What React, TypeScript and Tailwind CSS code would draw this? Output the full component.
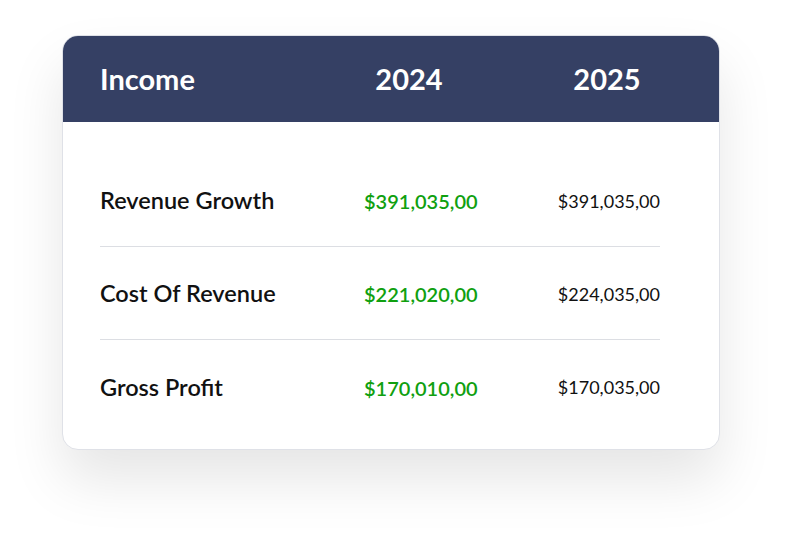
const rows = [
  { label: 'Revenue Growth', y2024: '$391,035,00', y2025: '$391,035,00' },
  { label: 'Cost Of Revenue', y2024: '$221,020,00', y2025: '$224,035,00' },
  { label: 'Gross Profit', y2024: '$170,010,00', y2025: '$170,035,00' },
]

export default function App() {
  return (
    <div
      className="w-[800px] h-[556px] bg-white pt-[35px] pl-[62px]"
      style={{ fontFamily: 'Lato, "Noto Sans", sans-serif' }}
    >
      <div className="w-[658px] rounded-[16px] border border-[#dfe1e7] bg-white overflow-hidden shadow-[0_30px_55px_rgba(0,0,0,0.1)]">
        {/* header */}
        <div className="h-[86px] bg-[#354064] flex items-center px-[37px] text-white font-bold text-[29px]">
          <div className="w-[264px]">Income</div>
          <div className="w-[90px] text-center">2024</div>
          <div className="w-[100px]" />
          <div className="w-[106px] text-center">2025</div>
        </div>

        {/* body */}
        <div className="pl-[37px] pr-[59px] pt-[32px] pb-[16px]">
          {rows.map((r, i) => (
            <div
              key={r.label}
              className={
                'h-[93px] flex items-center pt-[2px] ' +
                (i < rows.length - 1 ? 'border-b border-[#dcdee3]' : '')
              }
            >
              <div className="w-[264px] text-[23.5px] font-semibold text-[#111]">{r.label}</div>
              <div className="flex-1 text-[20px] font-semibold text-[#10a010]">{r.y2024}</div>
              <div className="text-right text-[18px] text-[#111]">{r.y2025}</div>
            </div>
          ))}
        </div>
      </div>
    </div>
  )
}
